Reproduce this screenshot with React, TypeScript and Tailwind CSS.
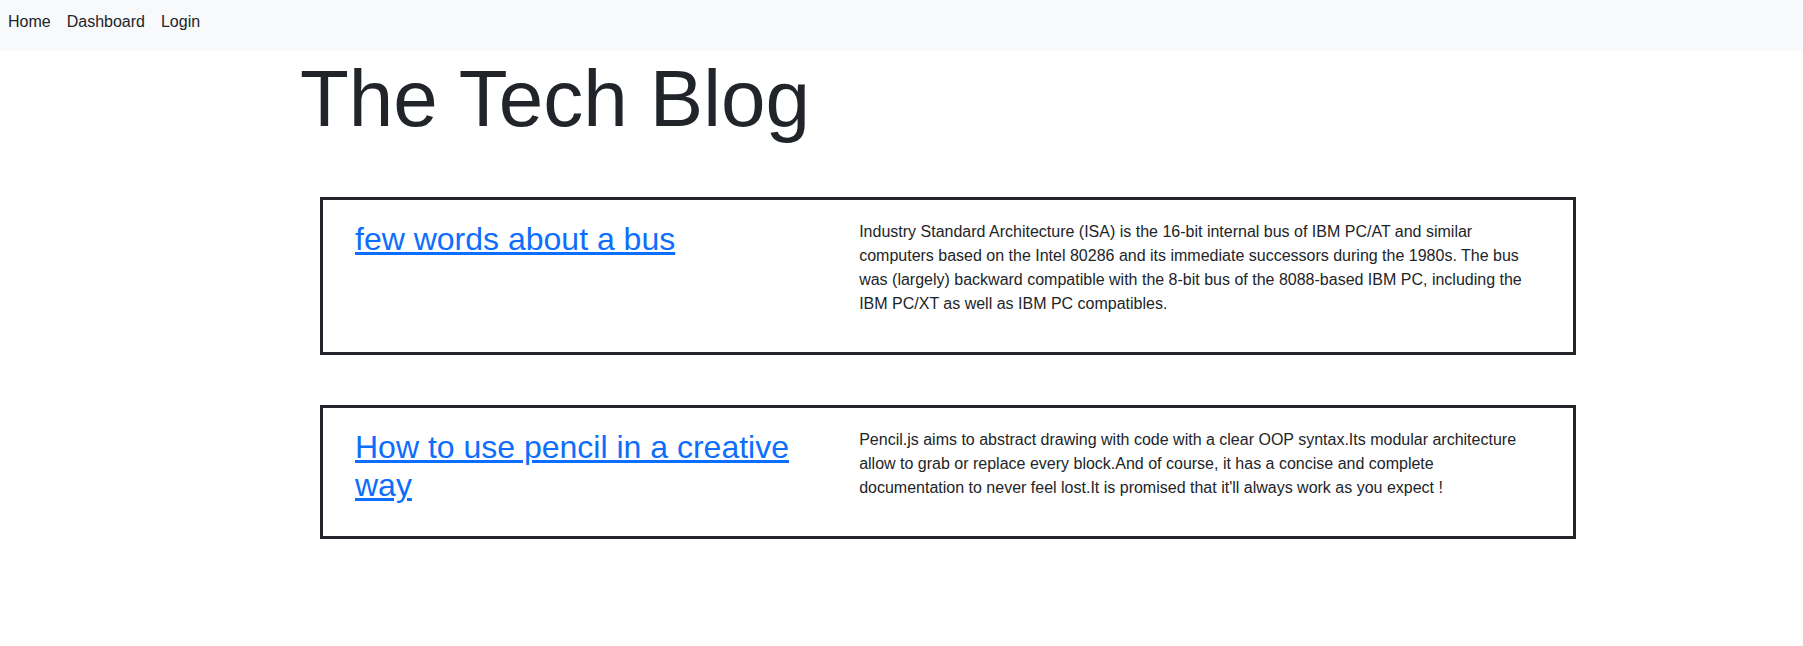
const posts = [
  {
    title: "few words about a bus",
    body: "Industry Standard Architecture (ISA) is the 16-bit internal bus of IBM PC/AT and similar computers based on the Intel 80286 and its immediate successors during the 1980s. The bus was (largely) backward compatible with the 8-bit bus of the 8088-based IBM PC, including the IBM PC/XT as well as IBM PC compatibles.",
  },
  {
    title: "How to use pencil in a creative way",
    body: "Pencil.js aims to abstract drawing with code with a clear OOP syntax.Its modular architecture allow to grab or replace every block.And of course, it has a concise and complete documentation to never feel lost.It is promised that it'll always work as you expect !",
  },
];

function Navbar() {
  return (
    <nav className="h-[51px] bg-[#f8f9fa] pt-[10px]">
      <ul className="flex">
        {["Home", "Dashboard", "Login"].map((item) => (
          <li key={item}>
            <a href="#" className="block px-2 text-[16px] leading-6 text-[#212529]">
              {item}
            </a>
          </li>
        ))}
      </ul>
    </nav>
  );
}

function PostCard({ title, body }: { title: string; body: string }) {
  return (
    <article className="w-[1256px] border-[3px] border-[#212529] px-8 py-5">
      <div className="-mx-3 flex">
        <div className="w-5/12 px-3">
          <h2 className="text-[32px] leading-[1.2]">
            <a href="#" className="text-[#0d6efd] underline">
              {title}
            </a>
          </h2>
        </div>
        <div className="w-7/12 px-3">
          <p className="mb-4 text-[16px] leading-6 text-[#212529]">{body}</p>
        </div>
      </div>
    </article>
  );
}

export default function App() {
  return (
    <div className="min-h-screen bg-white font-['Liberation_Sans',Arial,sans-serif] text-[#212529]">
      <Navbar />
      <main className="pl-[300px]">
        <h1 className="text-[80px] leading-[1.2] text-[#212529]">The Tech Blog</h1>
        <section className="flex flex-col gap-[50px] pl-[20px] pt-[50px]">
          {posts.map((post) => (
            <PostCard key={post.title} title={post.title} body={post.body} />
          ))}
        </section>
      </main>
    </div>
  );
}
